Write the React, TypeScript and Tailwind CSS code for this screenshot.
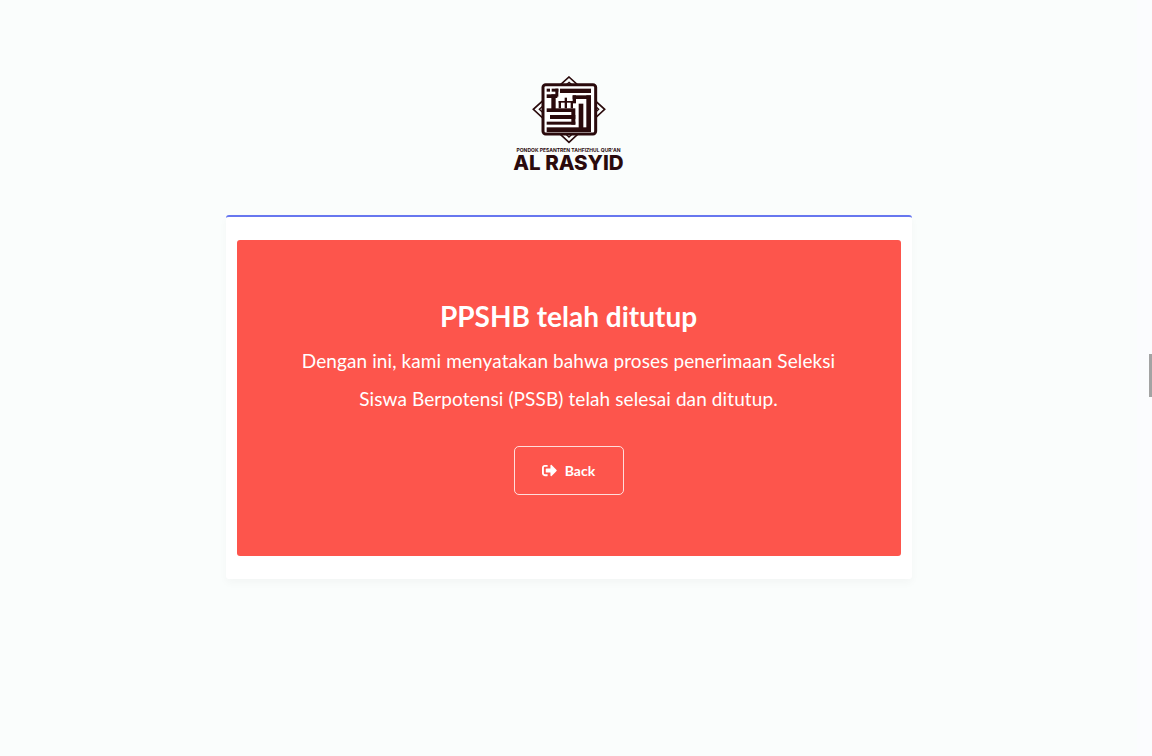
import { FaSignOutAlt } from 'react-icons/fa';

function Logo() {
  return (
    <div className="flex flex-col items-center w-[112px]">
      <svg width="74" height="68" viewBox="96 33 222 204" className="block">
        <g fill="none" stroke="#2a0a0c">
          <path d="M207 36 L314 133 L207 232 L100 133 Z" strokeWidth="5" />
          <path d="M207 52 L296 133 L207 216 L118 133 Z" strokeWidth="4" />
        </g>
        <rect x="129" y="59" width="158" height="148" rx="8" fill="#fff" stroke="#2a0a0c" strokeWidth="9" />
        <g fill="#2a0a0c">
          <rect x="180" y="71" width="93" height="13" />
          <rect x="140" y="71" width="10" height="9" />
          <rect x="155" y="71" width="20" height="9" />
          <rect x="166" y="71" width="9" height="24" />
          <rect x="218" y="91" width="55" height="11" />
          <rect x="218" y="91" width="10" height="24" />
          <rect x="259" y="91" width="14" height="110" />
          <rect x="236" y="116" width="14" height="85" />
          <rect x="140" y="88" width="32" height="11" />
          <rect x="154" y="88" width="13" height="52" />
          <rect x="140" y="130" width="86" height="11" />
          <rect x="176" y="108" width="7" height="22" />
          <rect x="194" y="98" width="7" height="32" />
          <rect x="212" y="108" width="7" height="22" />
          <rect x="176" y="108" width="43" height="5" />
          <rect x="150" y="150" width="76" height="12" />
          <rect x="214" y="141" width="12" height="38" />
          <rect x="140" y="170" width="86" height="9" />
          <rect x="140" y="187" width="133" height="14" />
        </g>
      </svg>
      <div className="mt-[3px] text-[5px] leading-[6px] font-bold text-[#2a0a0c] whitespace-nowrap font-['Inter',sans-serif]">
        PONDOK PESANTREN TAHFIZHUL QUR'AN
      </div>
      <div className="text-[20.5px] leading-[20px] font-extrabold text-[#2a0a0c] whitespace-nowrap font-['Inter',sans-serif]">
        AL RASYID
      </div>
    </div>
  );
}

export default function App() {
  return (
    <div className="relative min-h-[756px] flex overflow-hidden bg-[#fafdfc] font-['Lato','Noto_Sans',sans-serif]">
      <main className="flex-1 pt-[76px] flex flex-col items-center">
        <Logo />

        <div className="mt-[42px] w-[686px] h-[364px] bg-white border-t-2 border-[#6777ef] rounded-[3px] shadow-[0_4px_8px_rgba(0,0,0,0.03)] px-[11px] pt-[23px]">
          <div className="h-[316px] bg-[#fd554c] rounded-[3px] flex flex-col items-center text-white pt-[58px]">
            <h2 className="text-[28px] leading-[36px] font-bold">PPSHB telah ditutup</h2>
            <p className="mt-[8px] text-[19px] tracking-[0.1px] leading-[38px] text-center">
              Dengan ini, kami menyatakan bahwa proses penerimaan Seleksi
              <br />
              Siswa Berpotensi (PSSB) telah selesai dan ditutup.
            </p>
            <button className="mt-[28px] w-[110px] h-[49px] border border-white/80 rounded-[5px] flex items-center justify-center gap-[8px] text-[14px] font-bold">
              <FaSignOutAlt size={15} />
              Back
            </button>
          </div>
        </div>
      </main>

      <aside className="w-[15px] bg-[#fbfcfe]" />

      <div className="absolute right-0 top-[354px] w-[3px] h-[43px] bg-[#a3a3a3]" />
    </div>
  );
}
